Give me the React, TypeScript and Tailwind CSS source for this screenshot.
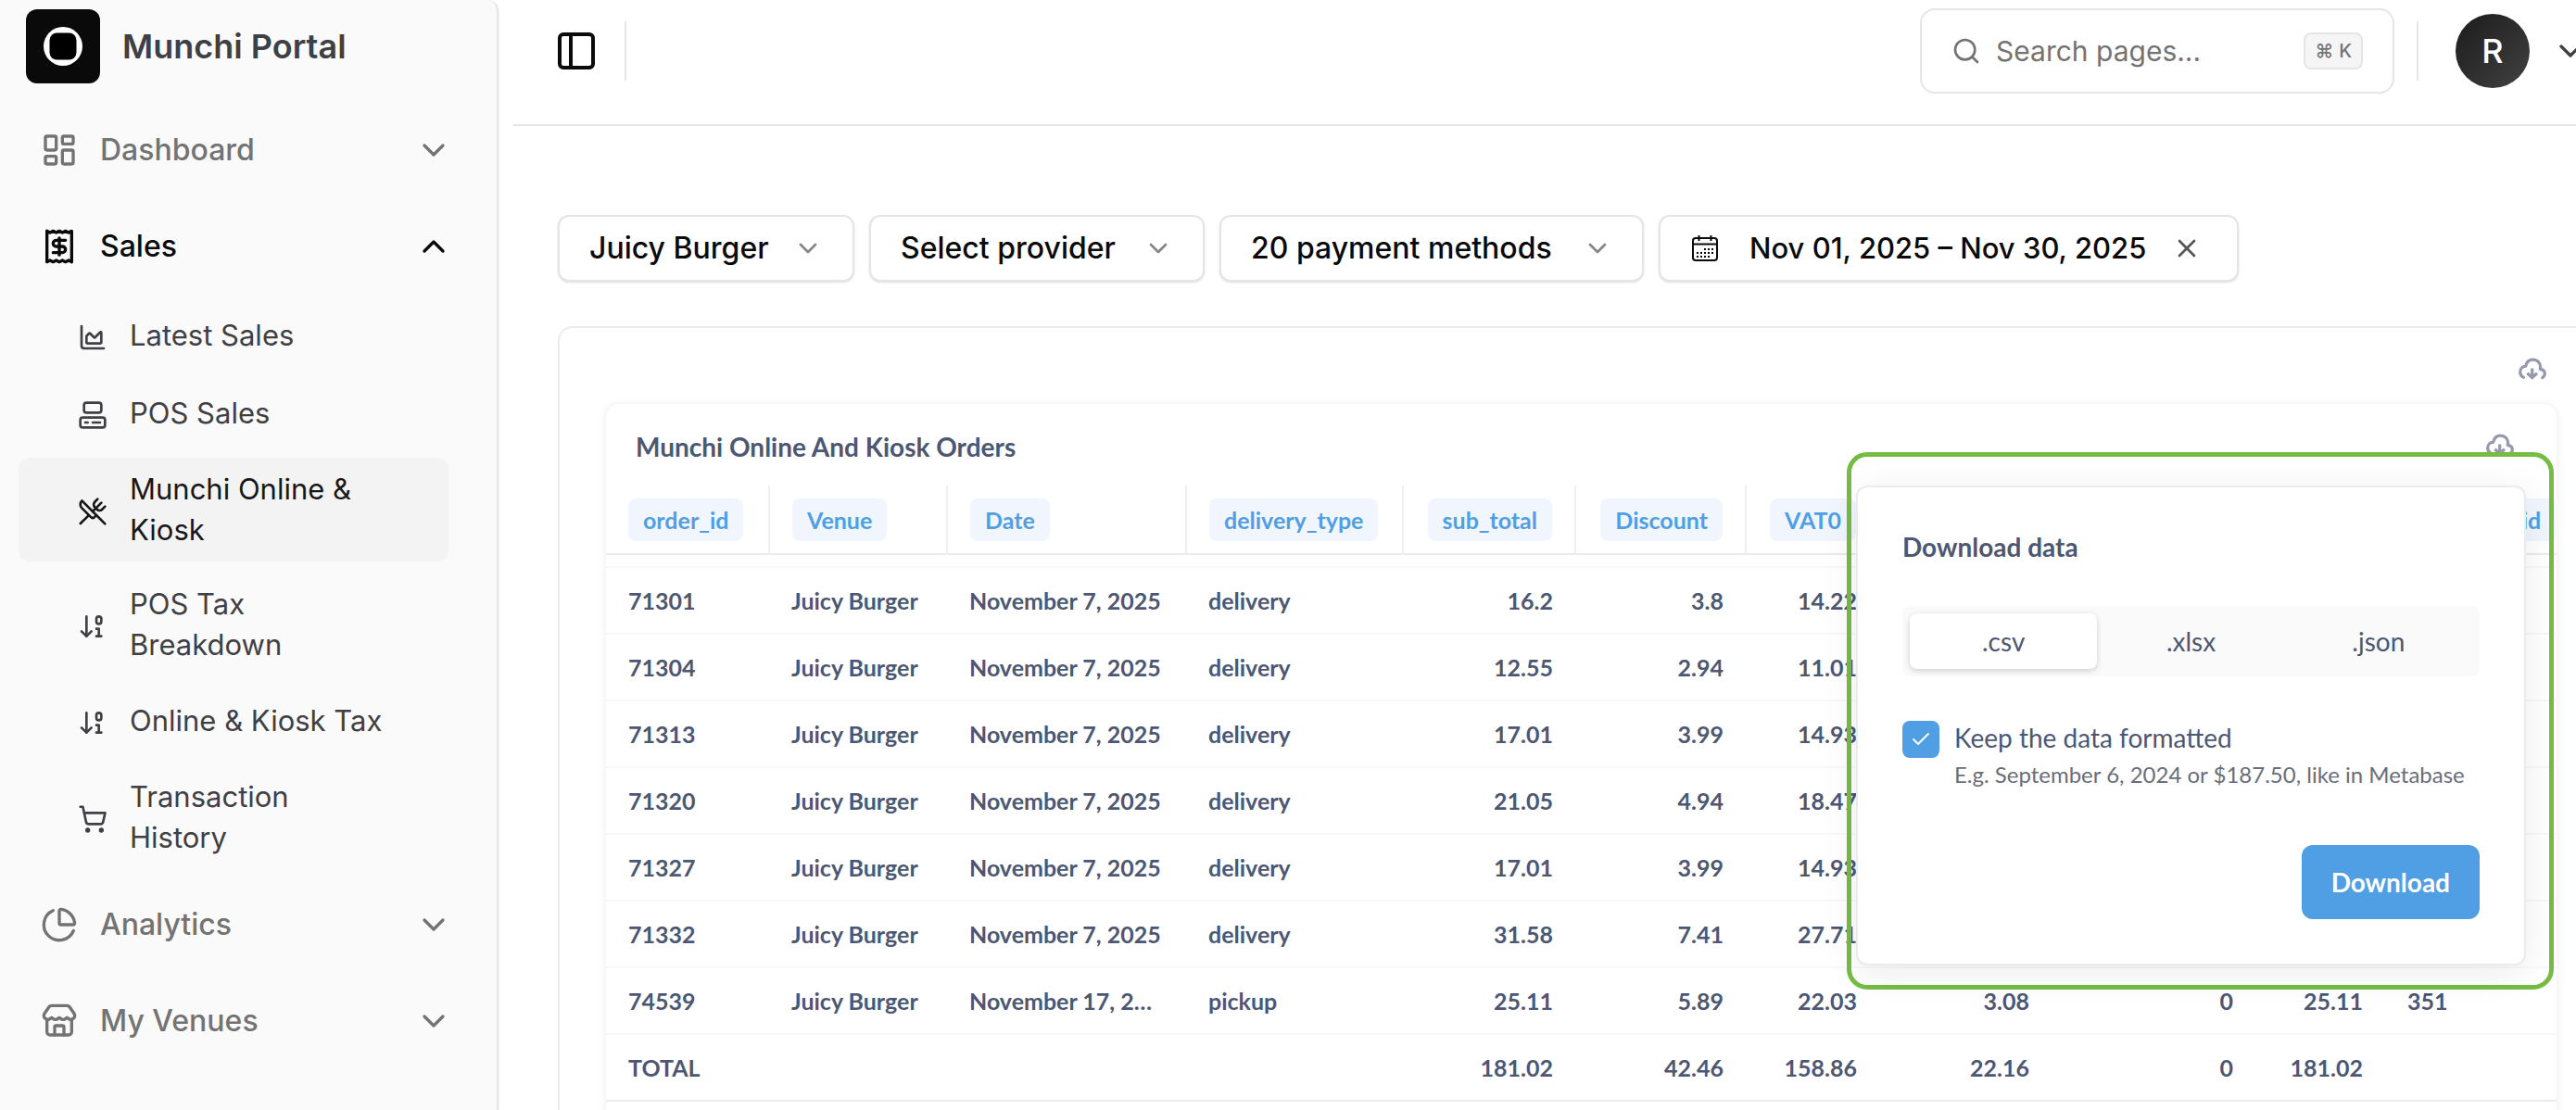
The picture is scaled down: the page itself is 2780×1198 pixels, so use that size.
import { useState } from "react"
import {
  ArrowDown01,
  ChartArea,
  ChartPie,
  Check,
  ChevronDown,
  ChevronUp,
  Computer,
  LayoutDashboard,
  PanelLeft,
  Receipt,
  Search,
  ShoppingCart,
  Store,
  UtensilsCrossed,
  X,
  type LucideIcon,
} from "lucide-react"

type NavItem = { label: string; icon: LucideIcon; active?: boolean }

const salesItems: NavItem[] = [
  { label: "Latest Sales", icon: ChartArea },
  { label: "POS Sales", icon: Computer },
  { label: "Munchi Online & Kiosk", icon: UtensilsCrossed, active: true },
  { label: "POS Tax Breakdown", icon: ArrowDown01 },
  { label: "Online & Kiosk Tax", icon: ArrowDown01 },
  { label: "Transaction History", icon: ShoppingCart },
]

const columns = [
  { name: "order_id", width: "w-[176px]" },
  { name: "Venue", width: "w-[192px]" },
  { name: "Date", width: "w-[258px]" },
  { name: "delivery_type", width: "w-[234px]" },
  { name: "sub_total", width: "w-[186px]", numeric: true },
  { name: "Discount", width: "w-[184px]", numeric: true },
  { name: "VAT0", width: "w-[144px]", numeric: true },
  { name: "VAT14", width: "w-[186px]", numeric: true },
  { name: "VAT25", width: "w-[220px]", numeric: true },
  { name: "total", width: "w-[140px]", numeric: true },
  { name: "business_id", width: "w-auto" },
]

const rows = [
  ["71301", "Juicy Burger", "November 7, 2025", "delivery", "16.2", "3.8", "14.22", "", "", "", ""],
  ["71304", "Juicy Burger", "November 7, 2025", "delivery", "12.55", "2.94", "11.01", "", "", "", ""],
  ["71313", "Juicy Burger", "November 7, 2025", "delivery", "17.01", "3.99", "14.93", "", "", "", ""],
  ["71320", "Juicy Burger", "November 7, 2025", "delivery", "21.05", "4.94", "18.47", "", "", "", ""],
  ["71327", "Juicy Burger", "November 7, 2025", "delivery", "17.01", "3.99", "14.93", "", "", "", ""],
  ["71332", "Juicy Burger", "November 7, 2025", "delivery", "31.58", "7.41", "27.71", "", "", "", ""],
  ["74539", "Juicy Burger", "November 17, 2025", "pickup", "25.11", "5.89", "22.03", "3.08", "0", "25.11", "351"],
  ["TOTAL", "", "", "", "181.02", "42.46", "158.86", "22.16", "0", "181.02", ""],
]

function Logo() {
  return (
    <svg viewBox="0 0 80 80" className="size-20 shrink-0" aria-hidden="true">
      <rect width="80" height="80" rx="12" fill="#0a0a0a" />
      <circle cx="40" cy="40" r="21" fill="#fff" />
      <rect x="25.5" y="25.5" width="29" height="29" rx="8" fill="#000" />
    </svg>
  )
}

function CloudDownload() {
  return (
    <svg viewBox="0 0 30 24" className="h-6 w-[30px]" fill="none" stroke="#949aab" strokeWidth="3.2" aria-hidden="true">
      <path d="M5.4 21.4C3 20.2 1.7 18 1.7 15.4c0-3.400 2.600-6 6-6.200C8.600 5 11.500 2.200 15.600 2.200c4.600 0 8 3.400 8 7.800 0 .9-.1 1.600-.4 2.300 3 .4 5.100 2.400 5.100 5 0 1.900-1 3.400-2.600 4.400" strokeLinecap="round" strokeLinejoin="round" />
      <path d="M14.700 11.500v10M9.400 16.800l5.300 4.700 5.300-4.700" />
    </svg>
  )
}

// Calendar with a dotted day grid
function CalendarDots() {
  const dots = [
    [14, 15], [18, 15], [22, 15],
    [6, 19], [10, 19], [14, 19], [18, 19], [22, 19],
    [6, 23], [10, 23], [14, 23], [18, 23],
  ]
  return (
    <svg viewBox="0 0 28 28" className="size-7 shrink-0" fill="none" stroke="#0a0a0a" strokeWidth="2" aria-hidden="true">
      <rect x="1" y="3" width="26" height="24" rx="3" />
      <path d="M1 9.500h26M7.500 0v6M20.500 0v6" />
      {dots.map(([x, y]) => (
        <rect key={`${x}-${y}`} x={x - 1} y={y - 1} width="2" height="2" fill="#0a0a0a" stroke="none" />
      ))}
    </svg>
  )
}

function NavGroup({ label, icon: Icon, open = false }: { label: string; icon: LucideIcon; open?: boolean }) {
  const Chevron = open ? ChevronUp : ChevronDown
  return (
    <button
      type="button"
      aria-expanded={open}
      className={`flex h-[88px] w-full items-center gap-6 pr-7 pl-6 text-left text-[32px] leading-[44px] font-medium ${
        open ? "text-[#0a0a0a]" : "text-[#737373]"
      }`}
    >
      <Icon className="size-10 shrink-0" />
      <span className="flex-1">{label}</span>
      <Chevron className="size-10 shrink-0" />
    </button>
  )
}

function Sidebar() {
  return (
    <aside className="flex w-[538px] shrink-0 flex-col rounded-tr-xl border-r-2 border-[#e5e5e5] bg-[#fafafa] px-5 pt-[10px] shadow-sm">
      <div className="flex items-center gap-6 pl-2">
        <Logo />
        <span className="text-[36px] leading-[48px] font-semibold text-[#3f3f46]">Munchi Portal</span>
      </div>
      <nav className="mt-7 flex flex-col gap-4">
        <NavGroup label="Dashboard" icon={LayoutDashboard} />
        <NavGroup label="Sales" icon={Receipt} open />
        <ul className="flex flex-col gap-3">
          {salesItems.map(({ label, icon: Icon, active }) => (
            <li key={label}>
              <a
                href="#"
                className={`flex min-h-[72px] w-[464px] items-center gap-6 rounded-xl py-3 pr-16 pl-16 text-[31px] leading-[44px] ${
                  active ? "bg-[#f3f3f3] text-[#18181b]" : "text-[#3f3f46]"
                }`}
              >
                <Icon className="mt-1 size-8 shrink-0" />
                <span>{label}</span>
              </a>
            </li>
          ))}
        </ul>
        <NavGroup label="Analytics" icon={ChartPie} />
        <NavGroup label="My Venues" icon={Store} />
      </nav>
    </aside>
  )
}

function Header() {
  return (
    <header className="ml-4 flex h-[136px] shrink-0 items-center border-b-2 border-[#e5e5e5] pb-6 pl-11">
      <button type="button" aria-label="Toggle sidebar" className="text-[#0a0a0a]">
        <PanelLeft className="size-12" />
      </button>
      <div className="ml-7 h-16 w-0.5 bg-[#e5e5e5]" />
      <div className="ml-auto flex h-[92px] w-[512px] items-center gap-4 rounded-2xl border-2 border-[#e5e5e5] pr-8 pl-8 text-[#737373]">
        <Search className="size-8 shrink-0" />
        <input
          type="text"
          aria-label="Search pages"
          placeholder="Search pages..."
          className="min-w-0 flex-1 bg-transparent text-[30px] leading-[44px] outline-none placeholder:text-[#737373]"
        />
        <kbd className="flex h-10 items-center gap-1.5 rounded-lg border-2 border-[#e5e5e5] bg-[#f5f5f5] px-2.5 font-['Inter','DejaVu_Sans',sans-serif] text-xl font-medium">
          <span>⌘</span>
          <span>K</span>
        </kbd>
      </div>
      <div className="ml-6 h-16 w-0.5 bg-[#e5e5e5]" />
      <button type="button" aria-label="Account menu" className="-mr-3.5 ml-10 flex items-center gap-6 text-[#404040]">
        <span className="flex size-20 items-center justify-center rounded-full bg-linear-to-br from-[#1c1c1c] to-[#424242] text-[36px] font-medium text-white">
          R
        </span>
        <ChevronDown className="size-10" />
      </button>
    </header>
  )
}

function FilterSelect({ label, value, width }: { label: string; value: string; width: string }) {
  return (
    <div
      className={`flex h-[72px] items-center justify-between rounded-xl border-2 border-[#e5e5e5] bg-white px-8 shadow-sm ${width}`}
    >
      <select
        aria-label={label}
        className="h-full min-w-0 flex-1 appearance-none bg-transparent text-[32px] leading-[44px] font-medium text-[#0a0a0a] outline-none"
      >
        <option>{value}</option>
      </select>
      <ChevronDown className="size-8 shrink-0 text-[#858585]" />
    </div>
  )
}

function Filters() {
  return (
    <div className="flex gap-4">
      <FilterSelect label="Venue" value="Juicy Burger" width="w-[320px]" />
      <FilterSelect label="Provider" value="Select provider" width="w-[362px]" />
      <FilterSelect label="Payment methods" value="20 payment methods" width="w-[458px]" />
      <div className="flex h-[72px] w-[626px] items-center rounded-xl border-2 border-[#e5e5e5] bg-white px-[34px] text-[31px] leading-[44px] font-medium text-[#0a0a0a] shadow-sm">
        <button type="button" className="flex flex-1 items-center gap-[34px] whitespace-nowrap">
          <CalendarDots />
          Nov 01, 2025 – Nov 30, 2025
        </button>
        <button type="button" aria-label="Clear dates" className="mr-1 text-[#555]">
          <X className="size-8" />
        </button>
      </div>
    </div>
  )
}

function OrdersTable() {
  return (
    <table className="w-full table-fixed border-collapse text-[25px] leading-[30px] font-bold text-[#4c5773]">
      <thead>
        <tr className="h-[74px] border-b-2 border-[#ebebeb]">
          {columns.map((col) => (
            <th
              key={col.name}
              className={`border-r-2 border-[#efefef] px-6 last:border-r-0 ${col.width} ${
                col.numeric ? "text-right" : "text-left"
              }`}
            >
              <span className="inline-flex h-[46px] items-center rounded-lg bg-[#f1f6fe] px-4 text-[#509ee3]">
                {col.name}
              </span>
            </th>
          ))}
        </tr>
      </thead>
      <tbody>
        <tr className="h-[14px] border-b-2 border-[#f8f8f8]">
          <td colSpan={columns.length} />
        </tr>
        {rows.map((row) => (
          <tr key={row[0]} className="h-[72px] border-b-2 border-[#f8f8f8] last:border-[#ebebeb]">
            {row.map((cell, i) => (
              <td
                key={columns[i].name}
                className={`truncate px-6 ${columns[i].numeric ? "text-right" : "text-left"}`}
              >
                {cell}
              </td>
            ))}
          </tr>
        ))}
      </tbody>
    </table>
  )
}

function DownloadPopover() {
  const [format, setFormat] = useState(".csv")
  const [formatted, setFormatted] = useState(true)

  return (
    <div className="absolute top-[52px] right-[3px] w-[763px] rounded-[22px] border-5 border-[#76bc43] pt-[31px] pr-[25px] pb-[21px] pl-[5px]">
      <div
        role="dialog"
        aria-label="Download data"
        className="flex flex-col rounded-xl border-2 border-[#ebebeb] bg-white p-12 text-[28px] leading-[36px] text-[#4c5773] shadow-[0_8px_40px_rgba(0,0,0,0.08)]"
      >
        <h3 className="leading-[32px] font-bold">Download data</h3>

        <div role="radiogroup" aria-label="File format" className="mt-12 flex rounded-lg bg-[#fafafa] p-2">
          {[".csv", ".xlsx", ".json"].map((f) => (
            <label
              key={f}
              className={`flex h-[60px] flex-1 cursor-pointer items-center justify-center rounded-lg ${
                format === f ? "bg-white shadow-[0_2px_6px_rgba(0,0,0,0.18)]" : ""
              }`}
            >
              <input
                type="radio"
                name="format"
                className="sr-only"
                checked={format === f}
                onChange={() => setFormat(f)}
              />
              {f}
            </label>
          ))}
        </div>

        <label className="mt-12 flex gap-4">
          <span className="grid size-10 shrink-0">
            <input
              type="checkbox"
              checked={formatted}
              onChange={(e) => setFormatted(e.target.checked)}
              className="col-start-1 row-start-1 size-10 appearance-none rounded-lg bg-[#509ee3]"
            />
            <Check className="pointer-events-none col-start-1 row-start-1 size-6 place-self-center text-white" />
          </span>
          <span className="flex flex-col gap-1">
            <span>Keep the data formatted</span>
            <span className="text-2xl leading-[36px] text-[#696e7b]">
              E.g. September 6, 2024 or $187.50, like in Metabase
            </span>
          </span>
        </label>

        <button type="button" className="mt-[58px] h-20 self-end rounded-xl bg-[#509ee3] px-8 font-bold text-white">
          Download
        </button>
      </div>
    </div>
  )
}

export default function App() {
  return (
    <div className="flex h-screen overflow-hidden bg-white font-['Inter',sans-serif]">
      <Sidebar />
      <main className="flex min-w-0 flex-1 flex-col">
        <Header />
        <div className="flex flex-1 flex-col gap-12 pt-24 pl-16">
          <Filters />
          <section className="relative flex-1 rounded-tl-2xl border-t-2 border-l-2 border-[#ebebeb] pt-20 pr-[19px] pl-12 font-['Lato',sans-serif]">
            <button type="button" aria-label="Download dashboard" className="absolute top-8 right-8">
              <CloudDownload />
            </button>
            <div className="relative h-[900px] rounded-2xl border-2 border-[#f7f7f7] shadow-[0_1px_8px_rgba(0,0,0,0.05)]">
              <div className="flex h-[88px] items-center justify-between pr-[46px] pl-8">
                <h2 className="pt-1 text-[28px] leading-[36px] font-bold text-[#4c5773]">
                  Munchi Online And Kiosk Orders
                </h2>
                <button type="button" aria-label="Download orders">
                  <CloudDownload />
                </button>
              </div>
              <OrdersTable />
              <DownloadPopover />
            </div>
          </section>
        </div>
      </main>
    </div>
  )
}
